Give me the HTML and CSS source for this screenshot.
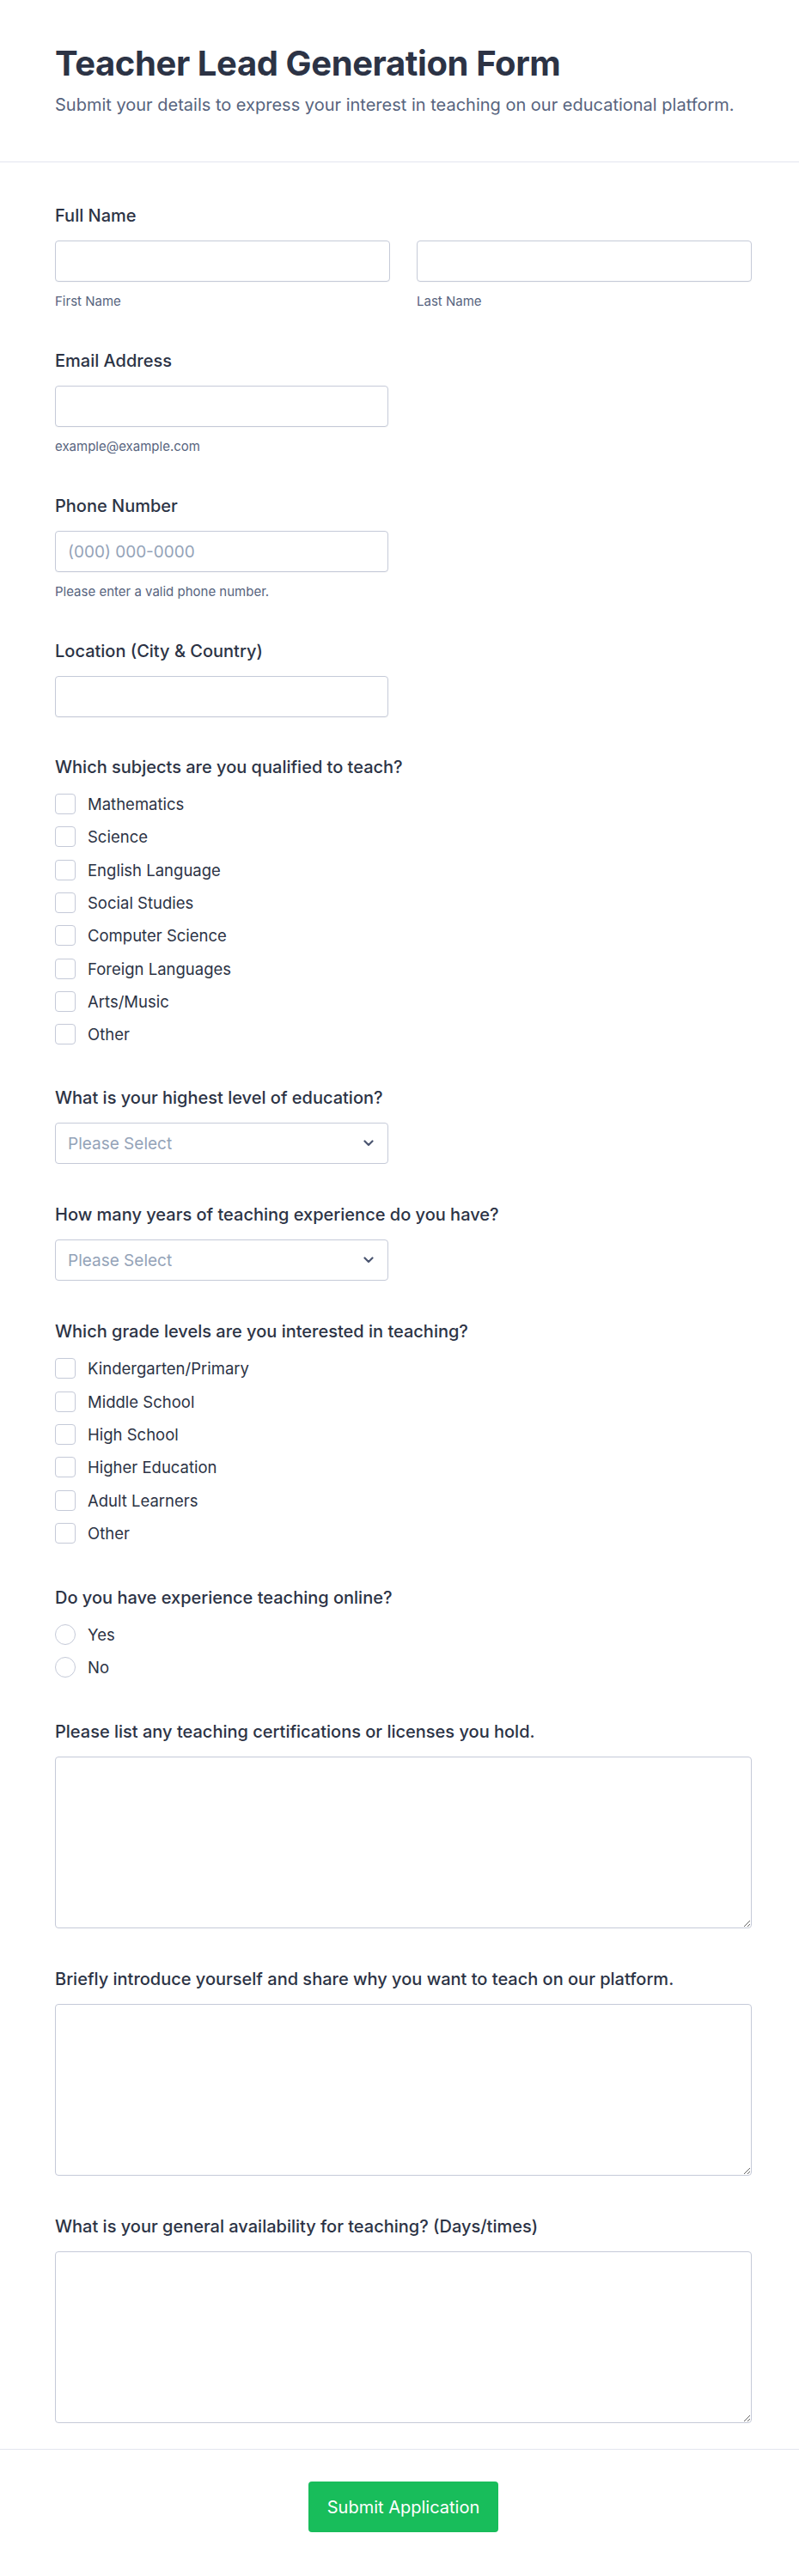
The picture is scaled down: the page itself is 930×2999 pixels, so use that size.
FILE: index.html
```html
<!DOCTYPE html>
<html lang="en">
<head>
<meta charset="utf-8">
<title>Teacher Lead Generation Form</title>
<link rel="stylesheet" href="styles.css">
</head>
<body>
<div class="page">
  <header class="header">
    <h1 class="title">Teacher Lead Generation Form</h1>
    <p class="subtitle">Submit your details to express your interest in teaching on our educational platform.</p>
  </header>

  <form class="form">
    <div class="field">
      <label class="label">Full Name</label>
      <div class="name-row">
        <div class="name-col">
          <input class="input" type="text">
          <span class="sublabel">First Name</span>
        </div>
        <div class="name-col">
          <input class="input" type="text">
          <span class="sublabel">Last Name</span>
        </div>
      </div>
    </div>

    <div class="field">
      <label class="label">Email Address</label>
      <input class="input half" type="email">
      <span class="sublabel">example@example.com</span>
    </div>

    <div class="field">
      <label class="label">Phone Number</label>
      <input class="input half" type="tel" placeholder="(000) 000-0000">
      <span class="sublabel">Please enter a valid phone number.</span>
    </div>

    <div class="field compact">
      <label class="label">Location (City &amp; Country)</label>
      <input class="input half" type="text">
    </div>

    <div class="field compact">
      <label class="label">Which subjects are you qualified to teach?</label>
      <div class="options">
        <label class="option"><span class="box"></span>Mathematics</label>
        <label class="option"><span class="box"></span>Science</label>
        <label class="option"><span class="box"></span>English Language</label>
        <label class="option"><span class="box"></span>Social Studies</label>
        <label class="option"><span class="box"></span>Computer Science</label>
        <label class="option"><span class="box"></span>Foreign Languages</label>
        <label class="option"><span class="box"></span>Arts/Music</label>
        <label class="option"><span class="box"></span>Other</label>
      </div>
    </div>

    <div class="field">
      <label class="label">What is your highest level of education?</label>
      <div class="select half">
        <span class="select-text">Please Select</span>
        <svg class="chevron" width="12" height="8" viewBox="0 0 12 8"><path d="M1.5 1.5 L6 6 L10.5 1.5" fill="none" stroke="#4b5671" stroke-width="2.2" stroke-linecap="round" stroke-linejoin="round"/></svg>
      </div>
    </div>

    <div class="field">
      <label class="label">How many years of teaching experience do you have?</label>
      <div class="select half">
        <span class="select-text">Please Select</span>
        <svg class="chevron" width="12" height="8" viewBox="0 0 12 8"><path d="M1.5 1.5 L6 6 L10.5 1.5" fill="none" stroke="#4b5671" stroke-width="2.2" stroke-linecap="round" stroke-linejoin="round"/></svg>
      </div>
    </div>

    <div class="field">
      <label class="label">Which grade levels are you interested in teaching?</label>
      <div class="options">
        <label class="option"><span class="box"></span>Kindergarten/Primary</label>
        <label class="option"><span class="box"></span>Middle School</label>
        <label class="option"><span class="box"></span>High School</label>
        <label class="option"><span class="box"></span>Higher Education</label>
        <label class="option"><span class="box"></span>Adult Learners</label>
        <label class="option"><span class="box"></span>Other</label>
      </div>
    </div>

    <div class="field">
      <label class="label">Do you have experience teaching online?</label>
      <div class="options">
        <label class="option"><span class="box round"></span>Yes</label>
        <label class="option"><span class="box round"></span>No</label>
      </div>
    </div>

    <div class="field">
      <label class="label">Please list any teaching certifications or licenses you hold.</label>
      <textarea class="textarea"></textarea>
    </div>

    <div class="field">
      <label class="label">Briefly introduce yourself and share why you want to teach on our platform.</label>
      <textarea class="textarea"></textarea>
    </div>

    <div class="field last">
      <label class="label">What is your general availability for teaching? (Days/times)</label>
      <textarea class="textarea"></textarea>
    </div>
  </form>

  <footer class="footer">
    <button class="submit" type="button">Submit Application</button>
  </footer>
</div>
</body>
</html>
```

FILE: styles.css
```css
* { box-sizing: border-box; }

html, body {
  margin: 0;
  padding: 0;
  background: #ffffff;
}

body {
  font-family: Inter, "Noto Sans", "Liberation Sans", sans-serif;
  color: #2c3345;
}

.header {
  padding: 50px 55px 52px 64px;
  border-bottom: 1px solid #e3e5ef;
}

.title {
  margin: 0;
  font-size: 40px;
  line-height: 48px;
  font-weight: 700;
  letter-spacing: -0.4px;
  color: #2c3345;
}

.subtitle {
  margin: 10px 0 0;
  font-size: 20px;
  line-height: 28px;
  font-weight: 400;
  color: #57647e;
}

.form {
  padding: 48px 55px 30px 64px;
}

.field {
  display: flex;
  flex-direction: column;
  align-items: flex-start;
  margin-bottom: 45px;
}

.field.compact { margin-bottom: 44px; }

.field.last { margin-bottom: 0; }

.label {
  display: block;
  font-size: 20px;
  line-height: 28px;
  font-weight: 500;
  color: #2c3345;
  margin-bottom: 15px;
}

.name-row {
  display: grid;
  grid-template-columns: 1fr 1fr;
  column-gap: 31px;
  width: 100%;
}

.name-col {
  display: flex;
  flex-direction: column;
}

.input {
  display: block;
  width: 100%;
  height: 48px;
  border: 1px solid #c5cad8;
  border-radius: 4px;
  background: #fff;
  padding: 0 14px;
  font-family: inherit;
  font-size: 19px;
  color: #2c3345;
  box-shadow: 0 1px 1px rgba(0,0,0,0.03);
}

.input.half, .select.half { width: 388px; }

.input::placeholder { color: #94a3b8; }

.sublabel {
  display: block;
  margin-top: 13px;
  font-size: 15px;
  line-height: 20px;
  color: #57647e;
}

.options {
  display: flex;
  flex-direction: column;
  gap: 10.33px;
  padding-bottom: 2px;
}

.option {
  display: flex;
  align-items: center;
  height: 28px;
  font-size: 18.5px;
  font-weight: 400;
  color: #2c3345;
}

.box {
  width: 24px;
  height: 24px;
  border: 1.5px solid #c5cad8;
  border-radius: 4px;
  margin-right: 14px;
  flex: none;
  background: #fff;
}

.box.round { border-radius: 50%; }

.select {
  display: flex;
  align-items: center;
  justify-content: space-between;
  height: 48px;
  border: 1px solid #c5cad8;
  border-radius: 4px;
  padding: 0 16px 0 14px;
  background: #fff;
}

.select-text {
  font-size: 19px;
  color: #94a3b8;
}

.chevron { display: block; }

.textarea {
  display: block;
  width: 100%;
  height: 200px;
  border: 1px solid #c5cad8;
  border-radius: 4px;
  padding: 12px 14px;
  font-family: inherit;
  font-size: 19px;
  resize: vertical;
  background: #fff;
}

.footer {
  border-top: 1px solid #e3e5ef;
  padding: 37px 55px 50px 64px;
  display: flex;
  justify-content: center;
}

.submit {
  height: 59px;
  padding: 0 22px;
  border: none;
  border-radius: 4px;
  background: #18bd5b;
  color: #fff;
  font-family: inherit;
  font-size: 20px;
  font-weight: 400;
  cursor: pointer;
}
```
